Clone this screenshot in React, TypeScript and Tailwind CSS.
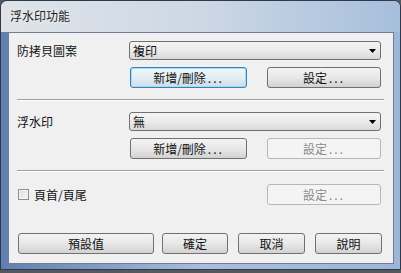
import type { ReactNode } from "react";

const font = { fontFamily: '"Noto Sans CJK TC", "Noto Sans CJK SC", sans-serif' };

function Btn({ children, w, focus, disabled }: { children: ReactNode; w: string; focus?: boolean; disabled?: boolean }) {
    let cls = "border-[#707070] bg-gradient-to-b from-[#f3f3f3] via-[#e8e8e8] to-[#d2d2d2] text-[#111]";
    if (focus) cls = "border-[#3c7fb1] bg-gradient-to-b from-[#eef7fc] via-[#e3eef5] to-[#cfdde7] shadow-[inset_0_0_0_1px_#9fdcf5] text-[#111]";
    if (disabled) cls = "border-[#b5b8ba] bg-[#f4f4f4] text-[#8a8a8a]";
    return (
        <div className={`${w} h-[21px] shrink-0 rounded-[3px] border flex items-center justify-center text-[12px] leading-none ${cls}`}>
            {children}
        </div>
    );
}

const Dots = () => <span className="tracking-[2px] ml-[2px]">...</span>;

function Combo({ value }: { value: string }) {
    return (
        <div className="w-[252px] h-[19px] shrink-0 rounded-[3px] border border-[#707070] bg-gradient-to-b from-[#f4f4f4] via-[#ebebeb] to-[#d9d9d9] flex items-center pl-[3px] pr-[4px] text-[12px] leading-none text-[#111]">
            <span className="flex-1">{value}</span>
            <svg width="7" height="4" viewBox="0 0 7 4"><path d="M0 0h7L3.5 4z" fill="#000" /></svg>
        </div>
    );
}

function Sep() {
    return (
        <div className="ml-[8px] w-[367px] flex flex-col">
            <div className="h-px bg-[#a0a0a0]" />
            <div className="h-px bg-white" />
        </div>
    );
}

export default function App() {
    return (
        <div className="w-[401px] h-[273px] bg-[#55595f] overflow-hidden" style={font}>
            <div className="w-[401px] h-[270px] rounded-t-[7px] border border-[#2e3a4c] bg-gradient-to-r from-[#5f7fae] via-[#a9bedb] to-[#9db6d8] flex flex-col">
                <div className="h-[31px] shrink-0 rounded-t-[6px] bg-gradient-to-r from-[#dfe3e8] via-[#cdd8e5] to-[#a6bedc] flex items-center pl-[9px] pb-[1px]">
                    <span className="text-[12px] text-[#1f1f1f] [text-shadow:0_0_6px_#fff]">浮水印功能</span>
                </div>
                <div className="ml-[7px] w-[386px] h-[232px] border border-[#6f7f96] bg-[#f0f0f0] flex flex-col text-[12px] text-[#111]">
                    <div className="mt-[8px] pl-[8px] flex items-center h-[19px]">
                        <span className="w-[112px] leading-none">防拷貝圖案</span>
                        <Combo value="複印" />
                    </div>
                    <div className="mt-[7px] pl-[121px] flex gap-[20px]">
                        <Btn w="w-[117px]" focus>新增/刪除<Dots /></Btn>
                        <Btn w="w-[114px]">設定<Dots /></Btn>
                    </div>
                    <div className="mt-[11px]"><Sep /></div>
                    <div className="mt-[11px] pl-[8px] flex items-center h-[19px]">
                        <span className="w-[112px] leading-none">浮水印</span>
                        <Combo value="無" />
                    </div>
                    <div className="mt-[7px] pl-[121px] flex gap-[20px]">
                        <Btn w="w-[117px]">新增/刪除<Dots /></Btn>
                        <Btn w="w-[114px]" disabled>設定<Dots /></Btn>
                    </div>
                    <div className="mt-[11px]"><Sep /></div>
                    <div className="mt-[12px] pl-[9px] flex items-center">
                        <div className="w-[11px] h-[11px] shrink-0 border border-[#8f8f8f] bg-gradient-to-br from-[#dcdcdc] to-[#f8f8f8] shadow-[inset_0_0_0_1px_#f4f4f4]" />
                        <span className="ml-[5px] w-[233px] leading-none">頁首/頁尾</span>
                        <Btn w="w-[114px]" disabled>設定<Dots /></Btn>
                    </div>
                    <div className="mt-[28px] pl-[9px] flex">
                        <Btn w="w-[136px]">預設值</Btn>
                        <div className="ml-[8px]"><Btn w="w-[66px]">確定</Btn></div>
                        <div className="ml-[10px]"><Btn w="w-[67px]">取消</Btn></div>
                        <div className="ml-[10px]"><Btn w="w-[67px]">說明</Btn></div>
                    </div>
                </div>
            </div>
        </div>
    );
}
